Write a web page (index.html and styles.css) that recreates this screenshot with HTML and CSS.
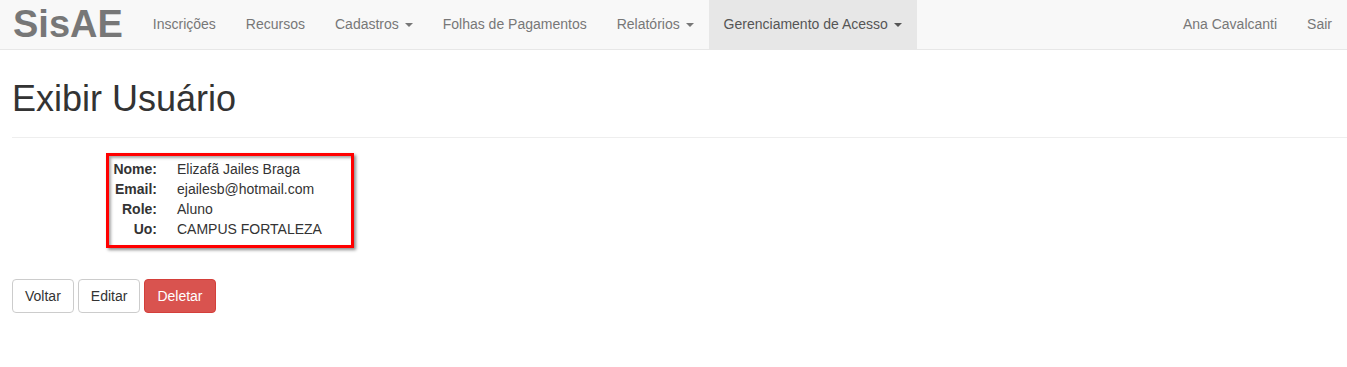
FILE: index.html
```html
<!DOCTYPE html>
<html lang="pt-BR">
<head>
<meta charset="utf-8">
<title>SisAE - Exibir Usuário</title>
<link rel="stylesheet" href="styles.css">
</head>
<body>
<nav class="navbar">
  <a class="brand" href="#">SisAE</a>
  <ul class="nav">
    <li><a href="#">Inscrições</a></li>
    <li><a href="#">Recursos</a></li>
    <li><a href="#">Cadastros <span class="caret"></span></a></li>
    <li><a href="#">Folhas de Pagamentos</a></li>
    <li><a href="#">Relatórios <span class="caret"></span></a></li>
    <li class="active"><a href="#">Gerenciamento de Acesso <span class="caret"></span></a></li>
  </ul>
  <ul class="nav nav-right">
    <li><a href="#">Ana Cavalcanti</a></li>
    <li><a href="#">Sair</a></li>
  </ul>
</nav>
<main class="content">
  <div class="page-header">
    <h1>Exibir Usuário</h1>
  </div>
  <div class="details">
    <dl class="info">
      <dt>Nome:</dt><dd>Elizafã Jailes Braga</dd>
      <dt>Email:</dt><dd>ejailesb@hotmail.com</dd>
      <dt>Role:</dt><dd>Aluno</dd>
      <dt>Uo:</dt><dd>CAMPUS FORTALEZA</dd>
    </dl>
  </div>
  <div class="actions">
    <a class="btn" href="#">Voltar</a>
    <a class="btn" href="#">Editar</a>
    <a class="btn btn-danger" href="#">Deletar</a>
  </div>
</main>
</body>
</html>
```
FILE: styles.css
```css
* { box-sizing: border-box; }
html, body { margin: 0; padding: 0; }
body {
  font-family: "Liberation Sans", Arial, sans-serif;
  font-size: 14px;
  line-height: 20px;
  color: #333;
  background: #fff;
}
a { text-decoration: none; }

.navbar {
  display: flex;
  align-items: stretch;
  height: 50px;
  background: #f8f8f8;
  border-bottom: 1px solid #e7e7e7;
}
.brand {
  display: block;
  padding: 0 15px 0 13px;
  font-size: 38px;
  font-weight: bold;
  line-height: 48px;
  color: #777;
}
.nav {
  display: flex;
  list-style: none;
  margin: 0;
  padding: 0;
}
.nav li a {
  display: block;
  padding: 14px 15px 15px;
  line-height: 20px;
  color: #777;
}
.nav li.active a {
  background: #e7e7e7;
  color: #555;
}
.nav-right { margin-left: auto; }
.caret {
  display: inline-block;
  width: 0;
  height: 0;
  margin-left: 2px;
  vertical-align: middle;
  border-top: 4px solid;
  border-right: 4px solid transparent;
  border-left: 4px solid transparent;
}

.content { padding: 0 0 0 12px; }
.page-header {
  margin-top: 29px;
  padding-bottom: 18px;
  border-bottom: 1px solid #eee;
}
.page-header h1 {
  margin: 0;
  font-size: 36px;
  font-weight: 500;
  line-height: 39.6px;
  color: #333;
}
.details {
  display: flex;
  margin-top: 15px;
  padding-left: 94px;
}
.info {
  display: grid;
  grid-template-columns: 48px auto;
  column-gap: 20px;
  width: 248px;
  margin: 0;
  padding: 3px 0 6px 0;
  border: 3px solid #f00;
  box-shadow: 2px 2px 3px rgba(0,0,0,0.45), inset 2px 2px 3px rgba(0,0,0,0.35);
}
.info dt {
  font-weight: bold;
  text-align: right;
}
.info dd { margin: 0; }

.actions {
  display: flex;
  gap: 4px;
  margin-top: 31px;
}
.btn {
  display: inline-block;
  padding: 6px 12px;
  font-size: 14px;
  line-height: 20px;
  color: #333;
  background: #fff;
  border: 1px solid #ccc;
  border-radius: 4px;
}
.btn-danger {
  color: #fff;
  background: #d9534f;
  border-color: #d43f3a;
}
```
